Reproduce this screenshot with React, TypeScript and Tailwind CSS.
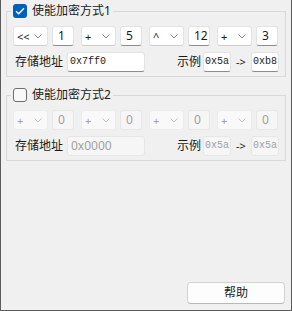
import React from 'react';

interface Step {
  op: string;
  value: string;
}

const group1: Step[] = [
  { op: '<<', value: '1' },
  { op: '+', value: '5' },
  { op: '^', value: '12' },
  { op: '+', value: '3' },
];

const group2: Step[] = [
  { op: '+', value: '0' },
  { op: '+', value: '0' },
  { op: '+', value: '0' },
  { op: '+', value: '0' },
];

function Chevron({ disabled }: { disabled: boolean }) {
  return (
    <svg width="8" height="5" viewBox="0 0 8 5" className="shrink-0">
      <path
        d="M0.5 0.5 L4 4 L7.5 0.5"
        fill="none"
        stroke={disabled ? '#c4c4c4' : '#8a8a8a'}
        strokeWidth="1"
      />
    </svg>
  );
}

function Combo({ op, disabled }: { op: string; disabled: boolean }) {
  return (
    <div
      className={
        disabled
          ? 'w-[35px] h-[20px] rounded-[3px] border border-[#ececec] bg-[#f9f9f9] text-[#a0a0a0] flex items-center justify-between pl-[3px] pr-[5px]'
          : 'w-[35px] h-[20px] rounded-[3px] border border-[#e3e3e3] border-b-[#cdcdcd] bg-white text-[#1a1a1a] flex items-center justify-between pl-[3px] pr-[5px]'
      }
    >
      <span className="text-[11px] leading-none">{op}</span>
      <Chevron disabled={disabled} />
    </div>
  );
}

function Field({ value, disabled, width, mono, pad }: { value: string; disabled: boolean; width: string; mono?: boolean; pad?: string }) {
  const base = `${width} h-[20px] rounded-[3px] flex items-center ${pad ?? 'pl-[5px]'} leading-none whitespace-nowrap overflow-hidden`;
  const font = mono ? " font-['Liberation_Mono',monospace] text-[10px]" : ' text-[12px]';
  const look = disabled
    ? ' border border-[#e6e6e6] bg-[#f6f6f6] text-[#a0a0a0]'
    : ' border border-[#e3e3e3] border-b-[#8d8d8d] bg-white text-[#1a1a1a]';
  return <div className={base + font + look}>{value}</div>;
}

function Group({ title, checked, steps, addr, from, to }: { title: string; checked: boolean; steps: Step[]; addr: string; from: string; to: string }) {
  const disabled = !checked;
  return (
    <fieldset className="mx-[5px] border border-[#d9d9d9] px-[6px] pt-[7px] pb-[5px]">
      <legend className="-ml-[2px] px-[2px] h-[16px] flex items-center gap-[5px]">
        {checked ? (
          <span className="w-[14px] h-[14px] rounded-[3px] bg-[#005fb8] flex items-center justify-center">
            <svg width="10" height="8" viewBox="0 0 10 8">
              <path d="M1 4.2 L3.7 6.8 L9 1.2" fill="none" stroke="white" strokeWidth="1.3" />
            </svg>
          </span>
        ) : (
          <span className="w-[14px] h-[14px] rounded-[3px] border border-[#6e6e6e] bg-[#f9f9f9]" />
        )}
        <span className="text-[12px] text-[#1a1a1a] leading-none">{title}</span>
      </legend>

      {/* operation chain */}
      <div className="flex gap-[7px]">
        {steps.map((s, i) => (
          <div key={i} className="flex gap-[4px]">
            <Combo op={s.op} disabled={disabled} />
            <Field value={s.value} disabled={disabled} width="w-[22px]" />
          </div>
        ))}
      </div>

      {/* address + example */}
      <div className="flex items-center mt-[6px] h-[19px]">
        <span className="w-[54px] pl-[2px] text-[12px] text-[#1a1a1a] leading-none">存储地址</span>
        {disabled ? (
          <Field value={addr} disabled width="w-[78px]" pad="pl-[3px]" />
        ) : (
          <Field value={addr} disabled={false} width="w-[78px]" mono pad="pl-[2px]" />
        )}
        <div className="flex-1" />
        <span className="text-[12px] text-[#1a1a1a] leading-none mr-[2px]">示例</span>
        <Field value={from} disabled={disabled} width="w-[28px]" mono pad="pl-[1px]" />
        <span className="w-[20px] text-center text-[11px] text-[#1a1a1a] leading-none">-&gt;</span>
        <Field value={to} disabled={disabled} width="w-[28px]" mono pad="pl-[1px]" />
      </div>
    </fieldset>
  );
}

export default function App() {
  return (
    <div className="w-[292px] h-[311px] bg-[#f0f0f0] border-x border-b border-[#5c5c5c] flex flex-col pt-[3px] font-['Noto_Sans','Noto_Sans_CJK_SC',sans-serif]">
      <Group title="使能加密方式1" checked steps={group1} addr="0x7ff0" from="0x5a" to="0xb8" />
      <div className="h-[10px]" />
      <Group title="使能加密方式2" checked={false} steps={group2} addr="0x0000" from="0x5a" to="0x5a" />
      <div className="flex-1" />
      <div className="flex justify-end pr-[6px] pb-[6px]">
        <button className="w-[98px] h-[22px] rounded-[4px] border border-[#d3d3d3] border-b-[#b8b8b8] bg-[#fdfdfd] text-[12px] text-[#1a1a1a] leading-none">
          帮助
        </button>
      </div>
    </div>
  );
}
